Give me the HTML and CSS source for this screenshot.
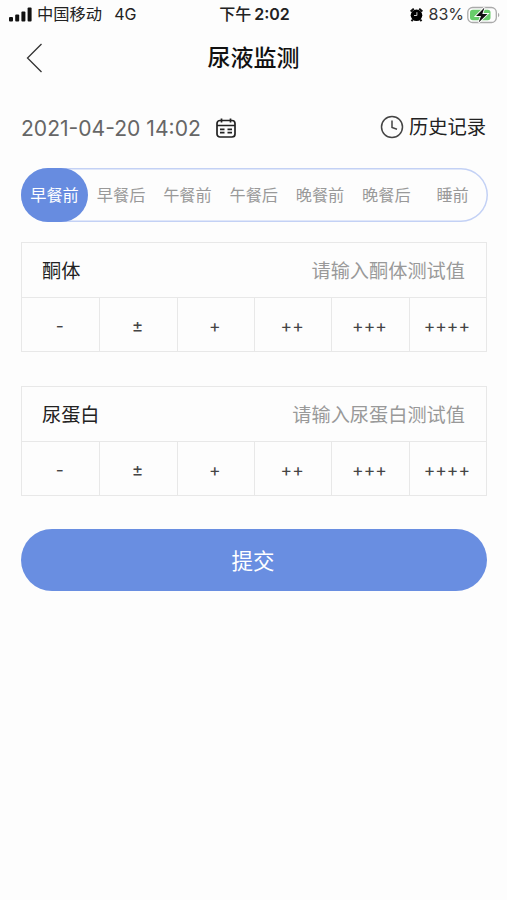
FILE: index.html
```html
<!DOCTYPE html>
<html lang="zh-CN">
<head>
    <meta charset="utf-8">
    <title>尿液监测</title>
    <meta name="viewport" content="width=device-width, initial-scale=1">
    <link rel="stylesheet" href="styles.css">
</head>
<body>
    <div class="status-bar">
        <div class="status-left">
            <svg class="signal" width="23" height="15" viewBox="0 0 23 15">
                <rect x="0" y="10" width="4" height="4.500" rx="1"/>
                <rect x="6.200" y="7.500" width="4" height="7" rx="1"/>
                <rect x="12.400" y="4.500" width="4" height="10" rx="1"/>
                <rect x="18.600" y="0.500" width="4" height="14" rx="1"/>
            </svg>
            <span class="carrier">中国移动</span>
            <span class="network">4G</span>
        </div>
        <div class="status-time">下午<span class="clock">2:02</span></div>
        <div class="status-right">
            <svg class="alarm" width="13" height="14" viewBox="0 0 13 14">
                <circle cx="6.500" cy="7.300" r="5.800"/>
                <path d="M0.600 3.500L3.800 0.700M12.400 3.500L9.200 0.700M2.800 11.500L1.500 13.200M10.200 11.500L11.500 13.200" stroke="#111" stroke-width="2"/>
                <path d="M6.900 4.200V7.500H4" fill="none" stroke="#ccc" stroke-width="1"/>
            </svg>
            <span class="percent">83%</span>
            <svg class="battery" width="33" height="18" viewBox="0 0 33 18">
                <rect x="0.800" y="1.500" width="28.500" height="15" rx="4.800" fill="none" stroke="#aaa" stroke-width="1.300"/>
                <rect x="3" y="3.700" width="20.500" height="10.600" rx="2.800" fill="#68cd6b"/>
                <path d="M31 6.800C32.800 7.500 32.800 10.500 31 11.200Z" fill="#aaa"/>
                <path d="M17.500 1.500L9 10H14L11.600 16.500L20.500 8H15.300Z" fill="#111" stroke="#fff" stroke-width="1.800" paint-order="stroke"/>
            </svg>
        </div>
    </div>

    <div class="nav-bar">
        <svg class="back" width="17" height="30" viewBox="0 0 17 30">
            <path d="M15.500 1L1.500 15L15.500 29"/>
        </svg>
        <h1>尿液监测</h1>
    </div>

    <div class="container">
        <div class="toolbar">
            <div class="date">
                <span class="date-text">2021-04-20 14:02</span>
                <svg class="calendar" width="20" height="20" viewBox="0 0 20 20">
                    <rect x="1" y="2.500" width="18" height="16.500" rx="3"/>
                    <path d="M1 7.500H19M5.500 0.500V4.500M14.500 0.500V4.500"/>
                    <path d="M4 11.300H8.500M11.500 11.300H16M4 14.700H8.500M11.500 14.700H16"/>
                </svg>
            </div>
            <div class="history">
                <svg class="history-icon" width="24" height="24" viewBox="0 0 24 24">
                    <circle cx="12" cy="12" r="10.500"/>
                    <path d="M12 5.500V12.500L17 14.200"/>
                </svg>
                <span>历史记录</span>
            </div>
        </div>

        <div class="tabs">
            <div class="tab active">早餐前</div>
            <div class="tab">早餐后</div>
            <div class="tab">午餐前</div>
            <div class="tab">午餐后</div>
            <div class="tab">晚餐前</div>
            <div class="tab">晚餐后</div>
            <div class="tab">睡前</div>
        </div>

        <div class="card">
            <div class="card-header">
                <label for="ketone">酮体</label>
                <input id="ketone" type="text" placeholder="请输入酮体测试值">
            </div>
            <div class="levels">
                <div>-</div>
                <div>±</div>
                <div>+</div>
                <div>++</div>
                <div>+++</div>
                <div>++++</div>
            </div>
        </div>

        <div class="card">
            <div class="card-header">
                <label for="protein">尿蛋白</label>
                <input id="protein" type="text" placeholder="请输入尿蛋白测试值">
            </div>
            <div class="levels">
                <div>-</div>
                <div>±</div>
                <div>+</div>
                <div>++</div>
                <div>+++</div>
                <div>++++</div>
            </div>
        </div>

        <button class="submit">提交</button>
    </div>
</body>
</html>
```
FILE: styles.css
```css
* {
    box-sizing: border-box;
}
body {
    margin: 0;
    min-height: 100vh;
    background-color: #fdfdfd;
    color: #222;
    font-family: Inter, 'Noto Sans CJK SC', sans-serif;
}
.status-bar {
    display: grid;
    grid-template-columns: 1fr auto 1fr;
    align-items: center;
    height: 29px;
    padding: 0 7px 0 9px;
    font-size: 16px;
    line-height: 29px;
}
.status-left,
.status-right {
    display: flex;
    align-items: center;
}
.status-right {
    justify-content: flex-end;
}
.signal {
    margin-right: 5px;
    fill: #111;
}
.carrier {
    font-size: 16.3px;
}
.network {
    margin-left: 12px;
}
.status-time {
    font-weight: 500;
}
.clock {
    margin-left: 3px;
    font-weight: 600;
}
.alarm {
    margin-right: 6px;
}
.percent {
    margin-right: 3px;
    color: #333;
}
.nav-bar {
    display: grid;
    grid-template-columns: 1fr auto 1fr;
    align-items: center;
    height: 57px;
    padding: 0 26px;
}
.nav-bar h1 {
    margin: 0;
    font-size: 23px;
    font-weight: 500;
    line-height: 34px;
    color: #111;
}
.back {
    fill: none;
    stroke: #333;
    stroke-width: 1.3;
}
.container {
    padding: 22px 20px 0 21px;
}
.toolbar {
    display: flex;
    justify-content: space-between;
    align-items: center;
    height: 40px;
    margin-bottom: 20px;
}
.date,
.history {
    display: flex;
    align-items: center;
}
.date-text {
    font-size: 21.1px;
    color: #666;
}
.calendar {
    margin-left: 15px;
    fill: none;
    stroke: #222;
    stroke-width: 1.7;
}
.history {
    margin-right: 1px;
    padding-bottom: 3px;
    font-size: 19.3px;
    line-height: 30px;
}
.history-icon {
    margin-right: 5px;
    fill: none;
    stroke: #444;
    stroke-width: 1.5;
}
.tabs {
    display: grid;
    grid-template-columns: 67px repeat(6, 66.3px);
    height: 54px;
    margin-right: -1px;
    border-radius: 27px;
    box-shadow: inset 0 0 0 1.5px #c3d1f5;
}
.tab {
    display: flex;
    align-items: center;
    justify-content: center;
    padding-bottom: 2px;
    font-size: 16.2px;
    color: #999;
}
.tab.active {
    border-radius: 27px;
    background-color: #678ce0;
    color: #fff;
}
.card {
    margin-top: 20px;
    border: 1px solid #e8e8e8;
}
.card + .card {
    margin-top: 34px;
}
.card-header {
    display: flex;
    align-items: center;
    justify-content: space-between;
    height: 54px;
    padding: 0 21px 0 20px;
    font-size: 19.2px;
}
.card-header input {
    width: 220px;
    padding: 1px 0 0;
    border: none;
    outline: none;
    background: none;
    font: inherit;
    text-align: right;
}
.card-header input::placeholder {
    color: #999;
}
.levels {
    display: grid;
    grid-template-columns: repeat(6, 1fr);
    height: 54px;
    border-top: 1px solid #e8e8e8;
}
.levels div {
    display: flex;
    align-items: center;
    justify-content: center;
    padding: 1px 2px 0 0;
    font-size: 17.5px;
    color: #444;
}
.levels div + div {
    border-left: 1px solid #e8e8e8;
}
.submit {
    display: block;
    width: 100%;
    height: 62px;
    margin-top: 33px;
    padding: 0 2px 2px 0;
    border: none;
    border-radius: 31px;
    background-color: #698ee1;
    color: #fff;
    font-family: inherit;
    font-size: 21.5px;
}
```
